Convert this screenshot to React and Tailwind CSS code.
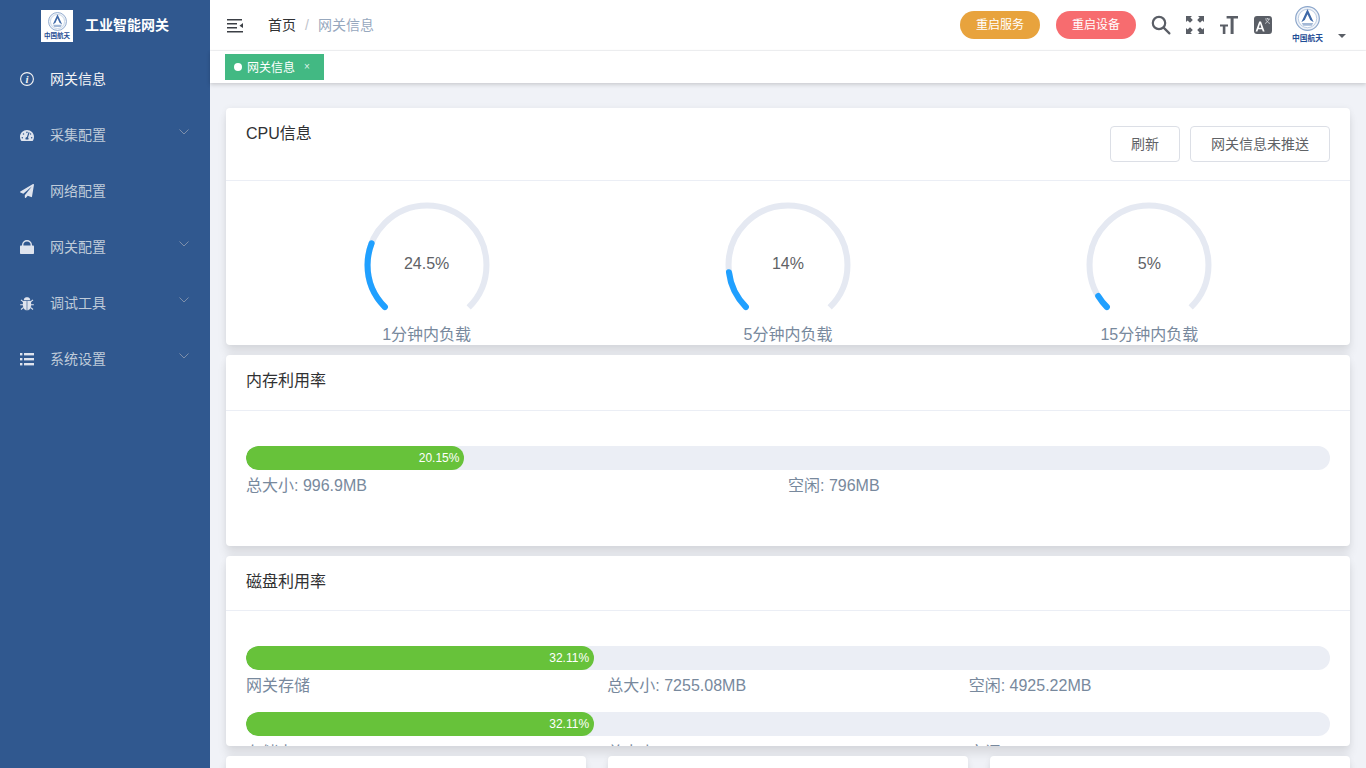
import React from 'react';
import { FaTachometerAlt, FaPaperPlane } from 'react-icons/fa';

function InfoIcon() {
  return (
    <svg width="14" height="14" viewBox="0 0 14 14" fill="none">
      <circle cx="7" cy="7" r="6.4" stroke="#f4f4f5" strokeWidth="1.1" />
      <text x="7" y="10.8" textAnchor="middle" fontSize="11" fontStyle="italic" fontWeight="700" fontFamily="Liberation Serif, serif" fill="#f4f4f5">i</text>
    </svg>
  );
}

function LockIcon() {
  return (
    <svg width="14" height="14" viewBox="0 0 14 14" fill="#dfe4ee">
      <path d="M2 6 V5 A5 5 0 0 1 12 5 V6 H10.6 V5 A3.6 3.6 0 0 0 3.4 5 V6 Z" />
      <rect x="0" y="5.4" width="14" height="8.6" rx="0.8" />
    </svg>
  );
}

function BugIcon() {
  return (
    <svg width="15" height="15" viewBox="0 0 14 14" fill="#dfe4ee" stroke="#dfe4ee">
      <path d="M4 3.6 A3 2.8 0 0 1 10 3.6 Z" strokeWidth="0.3" />
      <path d="M3 4.4 H6.6 V13.8 C4.4 13.6 3 11.6 3 9 Z" strokeWidth="0.2" />
      <path d="M11 4.4 H7.4 V13.8 C9.6 13.6 11 11.6 11 9 Z" strokeWidth="0.2" />
      <path d="M3.4 5.4 L1 3.4 M10.6 5.4 L13 3.4 M3.2 8.2 H0.2 M10.8 8.2 H13.8 M3.6 10.8 L1 13 M10.4 10.8 L13 13" fill="none" strokeWidth="1.1" />
    </svg>
  );
}

function ListIcon() {
  return (
    <svg width="14" height="14" viewBox="0 0 14 14" fill="#dfe4ee">
      <rect x="0" y="1" width="2.4" height="2.4" />
      <rect x="4" y="1" width="10" height="2.4" />
      <rect x="0" y="6" width="2.4" height="2.4" />
      <rect x="4" y="6" width="10" height="2.4" />
      <rect x="0" y="11" width="2.4" height="2.4" />
      <rect x="4" y="11" width="10" height="2.4" />
    </svg>
  );
}

const menu = [
  { id: 'info', title: '网关信息', icon: <InfoIcon />, active: true },
  { id: 'collect', title: '采集配置', icon: <FaTachometerAlt size={15} />, arrow: true },
  { id: 'network', title: '网络配置', icon: <FaPaperPlane size={14} /> },
  { id: 'gateway', title: '网关配置', icon: <LockIcon />, arrow: true },
  { id: 'debug', title: '调试工具', icon: <BugIcon />, arrow: true },
  { id: 'system', title: '系统设置', icon: <ListIcon />, arrow: true },
];

const gauges = [
  { value: 24.5, text: '24.5%', label: '1分钟内负载' },
  { value: 14, text: '14%', label: '5分钟内负载' },
  { value: 5, text: '5%', label: '15分钟内负载' },
];

function Logo({ size }) {
  return (
    <svg width={size} height={size} viewBox="0 0 26 26" fill="none">
      <circle cx="13" cy="13" r="12.3" fill="#eef2f8" stroke="#8aa5ca" strokeWidth="1.2" />
      <circle cx="13" cy="13" r="9.6" fill="#fff" stroke="#b4c6de" strokeWidth="0.9" />
      <path d="M13 3.2 L19.4 17 L15.8 14.6 L13 8.6 L10.2 14.6 L6.6 17 Z" fill="#3f69a8" />
      <path d="M7 17.6 H19 L17.4 20.6 H8.6 Z" fill="#a3b8d6" />
    </svg>
  );
}

function ChevronDown() {
  return (
    <svg width="10" height="6" viewBox="0 0 10 6" fill="none" stroke="#7d8fab" strokeWidth="1" className="mb-1.5">
      <path d="M0.5 0.5 L5 5 L9.5 0.5" />
    </svg>
  );
}

function Sidebar() {
  return (
    <aside className="w-[210px] h-screen shrink-0 bg-[#30588f] flex flex-col overflow-hidden">
      <div className="h-[51px] flex items-center pl-[41px] shrink-0">
        <div className="w-8 h-8 bg-white flex flex-col items-center pt-[2px] overflow-hidden">
          <Logo size={19} />
          <span className="text-[6.5px] leading-[8px] mt-px font-bold text-[#1f4e96] whitespace-nowrap">中国航天</span>
        </div>
        <span className="ml-3 pb-[2px] text-sm font-bold text-white">工业智能网关</span>
      </div>
      {menu.map((item) => (
        <div key={item.id} className="h-14 shrink-0 flex items-center pl-5 pr-[21px]">
          <span className="w-[14px] flex justify-center text-[#dfe4ee]">{item.icon}</span>
          <span className={`ml-4 text-sm ${item.active ? 'text-[#f4f4f5]' : 'text-[#bfcbd9]'}`}>{item.title}</span>
          {item.arrow && <span className="ml-auto flex"><ChevronDown /></span>}
        </div>
      ))}
    </aside>
  );
}

function Header() {
  return (
    <header className="h-[51px] shrink-0 bg-white flex items-center border-b border-[#f3f4f6]">
      <div className="ml-[17px] w-[16px] flex">
        <svg width="16" height="15" viewBox="0 0 16 15" fill="#3b3f45">
          <rect x="0" y="1" width="15" height="1.5" />
          <rect x="0" y="5" width="10" height="1.5" />
          <rect x="0" y="9" width="10" height="1.5" />
          <rect x="0" y="13" width="16" height="1.5" />
          <path d="M16 5 L12.5 7.7 L16 10 Z" />
        </svg>
      </div>
      <nav className="ml-[25px] pb-px text-sm flex items-center">
        <span className="text-[#303133]">首页</span>
        <span className="mx-[9px] text-[#c0c4cc]">/</span>
        <span className="text-[#97a8be]">网关信息</span>
      </nav>
      <div className="ml-auto flex items-center pr-[20px]">
        <button className="w-20 h-7 rounded-full bg-[#e8a33d] text-white text-xs">重启服务</button>
        <button className="ml-4 w-20 h-7 rounded-full bg-[#f76c6f] text-white text-xs">重启设备</button>
        <svg className="ml-[15px]" width="20" height="20" viewBox="0 0 20 20" fill="none" stroke="#5a5e66" strokeWidth="2.2">
          <circle cx="8" cy="8" r="6.2" />
          <path d="M12.6 12.6 L18.4 18.4" strokeLinecap="round" />
        </svg>
        <svg className="ml-[15px]" width="18" height="18" viewBox="0 0 18 18" fill="#5a5e66">
          <path d="M0 0 H6 L4.4 1.6 L6.8 4 L4 6.8 L1.6 4.4 L0 6 Z" />
          <path d="M18 0 V6 L16.4 4.4 L14 6.8 L11.2 4 L13.6 1.6 L12 0 Z" />
          <path d="M0 18 V12 L1.6 13.6 L4 11.2 L6.8 14 L4.4 16.4 L6 18 Z" />
          <path d="M18 18 H12 L13.6 16.4 L11.2 14 L14 11.2 L16.4 13.6 L18 12 Z" />
        </svg>
        <svg className="ml-[16px]" width="18" height="18" viewBox="0 0 18 18" fill="#5a5e66">
          <path d="M6.6 0 H18 V2.4 H13.6 V18 H10.6 V2.4 H6.6 Z" />
          <path d="M0 8.6 H8 V10.6 H5.4 V18 H2.8 V10.6 H0 Z" />
        </svg>
        <svg className="ml-[16px]" width="18" height="18" viewBox="0 0 18 18">
          <rect width="18" height="18" rx="3" fill="#5a5e66" />
          <path d="M1.6 15.5 L5.2 5.5 H7 L10.6 15.5 H8.8 L8 13.2 H4.2 L3.4 15.5 Z M4.8 11.7 H7.4 L6.1 7.8 Z" fill="#fff" />
          <path d="M11 3 H16 M13.5 2 V3 M15 3 C14.5 5 13 6.5 11 7.5 M12 4 C12.8 5.5 14.2 6.8 16 7.5" stroke="#e6e8ec" strokeWidth="0.7" fill="none" />
        </svg>
        <div className="ml-[20px] w-[31px] flex flex-col items-center">
          <Logo size={25} />
          <span className="text-[7.75px] leading-[10px] mt-[3px] font-bold text-[#1f4e96] whitespace-nowrap">中国航天</span>
        </div>
        <span className="ml-[15px] mt-[21px] w-0 h-0 border-x-4 border-x-transparent border-t-[4px] border-t-[#5a5e66]" />
      </div>
    </header>
  );
}

function TagsBar() {
  return (
    <div className="h-[32px] shrink-0 bg-white pl-[15px] pt-[3px] shadow-[0_2px_4px_0_rgba(0,0,0,0.14),0_0_3px_0_rgba(0,0,0,0.04)] relative">
      <div className="w-[99px] h-[26px] bg-[#42b983] text-white text-xs flex items-center pl-[9px]">
        <span className="w-2 h-2 rounded-full bg-white" />
        <span className="ml-[5px] pt-px">网关信息</span>
        <span className="ml-[9px] text-[10px] text-[#dff3ea]">×</span>
      </div>
    </div>
  );
}

function Gauge({ value, text, label }) {
  const r = 47.2;
  const perimeter = 2 * Math.PI * r;
  const rate = 0.75;
  const offset = (-perimeter * (1 - rate)) / 2;
  const d = `M50 50 m0 ${r} a${r} ${r} 0 1 1 0 ${-2 * r} a${r} ${r} 0 1 1 0 ${2 * r}`;
  return (
    <div className="flex flex-col items-center">
      <div className="relative w-[126px] h-[126px]">
        <svg viewBox="0 0 100 100" className="w-[126px] h-[126px]" fill="none">
          <path
            d={d}
            stroke="#e5e9f2"
            strokeWidth="4.8"
            style={{ strokeDasharray: `${perimeter * rate}px ${perimeter}px`, strokeDashoffset: `${offset}px` }}
          />
          <path
            d={d}
            stroke="#20a0ff"
            strokeWidth="4.8"
            strokeLinecap="round"
            style={{ strokeDasharray: `${perimeter * rate * (value / 100)}px ${perimeter}px`, strokeDashoffset: `${offset}px` }}
          />
        </svg>
        <span className="absolute inset-0 flex items-center justify-center text-base text-[#606266] pb-[3px]">{text}</span>
      </div>
      <div className="text-base text-[#78899d] leading-6 mt-[-5px]">{label}</div>
    </div>
  );
}

function Bar({ value }) {
  return (
    <div className="h-6 rounded-full bg-[#ebeef5] overflow-hidden">
      <div
        className="h-full rounded-full bg-[#67c23a] text-white text-xs flex items-center justify-end pr-[5px]"
        style={{ width: `${value}%` }}
      >
        {value}%
      </div>
    </div>
  );
}

function Card({ className, children }) {
  return (
    <section className={`bg-white rounded-[4px] shadow-[0_8px_10px_0_rgba(0,0,0,0.09),0_0_6px_0_rgba(0,0,0,0.05)] overflow-hidden shrink-0 ${className}`}>
      {children}
    </section>
  );
}

function App() {
  return (
    <div className="flex h-screen overflow-hidden font-['Liberation_Sans','Noto_Sans_CJK_SC',sans-serif]">
      <Sidebar />
      <div className="flex-1 min-w-0 flex flex-col bg-[#f0f2f7]">
        <Header />
        <TagsBar />
        <main className="flex-1 min-h-0 overflow-hidden px-4 pt-[25px] flex flex-col gap-[10px]">
          <Card className="h-[237px]">
            <div className="h-[73px] border-b border-[#ebeef5] pl-5 pr-5 flex items-start justify-between">
              <span className="mt-[14px] text-base text-[#303133]">CPU信息</span>
              <div className="mt-[18px] flex gap-[10px]">
                <button className="w-[70px] h-9 rounded-[4px] border border-[#dcdfe6] text-sm text-[#606266] bg-white">刷新</button>
                <button className="w-[140px] h-9 rounded-[4px] border border-[#dcdfe6] text-sm text-[#606266] bg-white">网关信息未推送</button>
              </div>
            </div>
            <div className="grid grid-cols-3 px-5 pt-[21px]">
              {gauges.map((g) => (
                <Gauge key={g.label} {...g} />
              ))}
            </div>
          </Card>

          <Card className="h-[191px]">
            <div className="h-[56px] border-b border-[#ebeef5] px-5 flex items-center text-base text-[#303133]">
              <span className="pb-[3px]">内存利用率</span>
            </div>
            <div className="px-5 pt-[35px]">
              <Bar value={20.15} />
              <div className="grid grid-cols-2 text-base text-[#78899d] leading-6 mt-[4px]">
                <span>总大小: 996.9MB</span>
                <span>空闲: 796MB</span>
              </div>
            </div>
          </Card>

          <Card className="h-[190px]">
            <div className="h-[55px] border-b border-[#ebeef5] px-5 flex items-center text-base text-[#303133]">
              <span className="pb-[3px]">磁盘利用率</span>
            </div>
            <div className="px-5 pt-[35px]">
              <Bar value={32.11} />
              <div className="grid grid-cols-3 text-base text-[#78899d] leading-6 mt-[4px] mb-[14px]">
                <span>网关存储</span>
                <span>总大小: 7255.08MB</span>
                <span>空闲: 4925.22MB</span>
              </div>
              <Bar value={32.11} />
              <div className="grid grid-cols-3 text-base text-[#78899d] leading-6 mt-[5px]">
                <span>存储卡</span>
                <span>总大小: 7255.08MB</span>
                <span>空闲: 4925.22MB</span>
              </div>
            </div>
          </Card>

          <div className="grid grid-cols-3 gap-[22px] shrink-0">
            <Card className="h-[60px]" />
            <Card className="h-[60px]" />
            <Card className="h-[60px]" />
          </div>
        </main>
      </div>
    </div>
  );
}

export default App;
